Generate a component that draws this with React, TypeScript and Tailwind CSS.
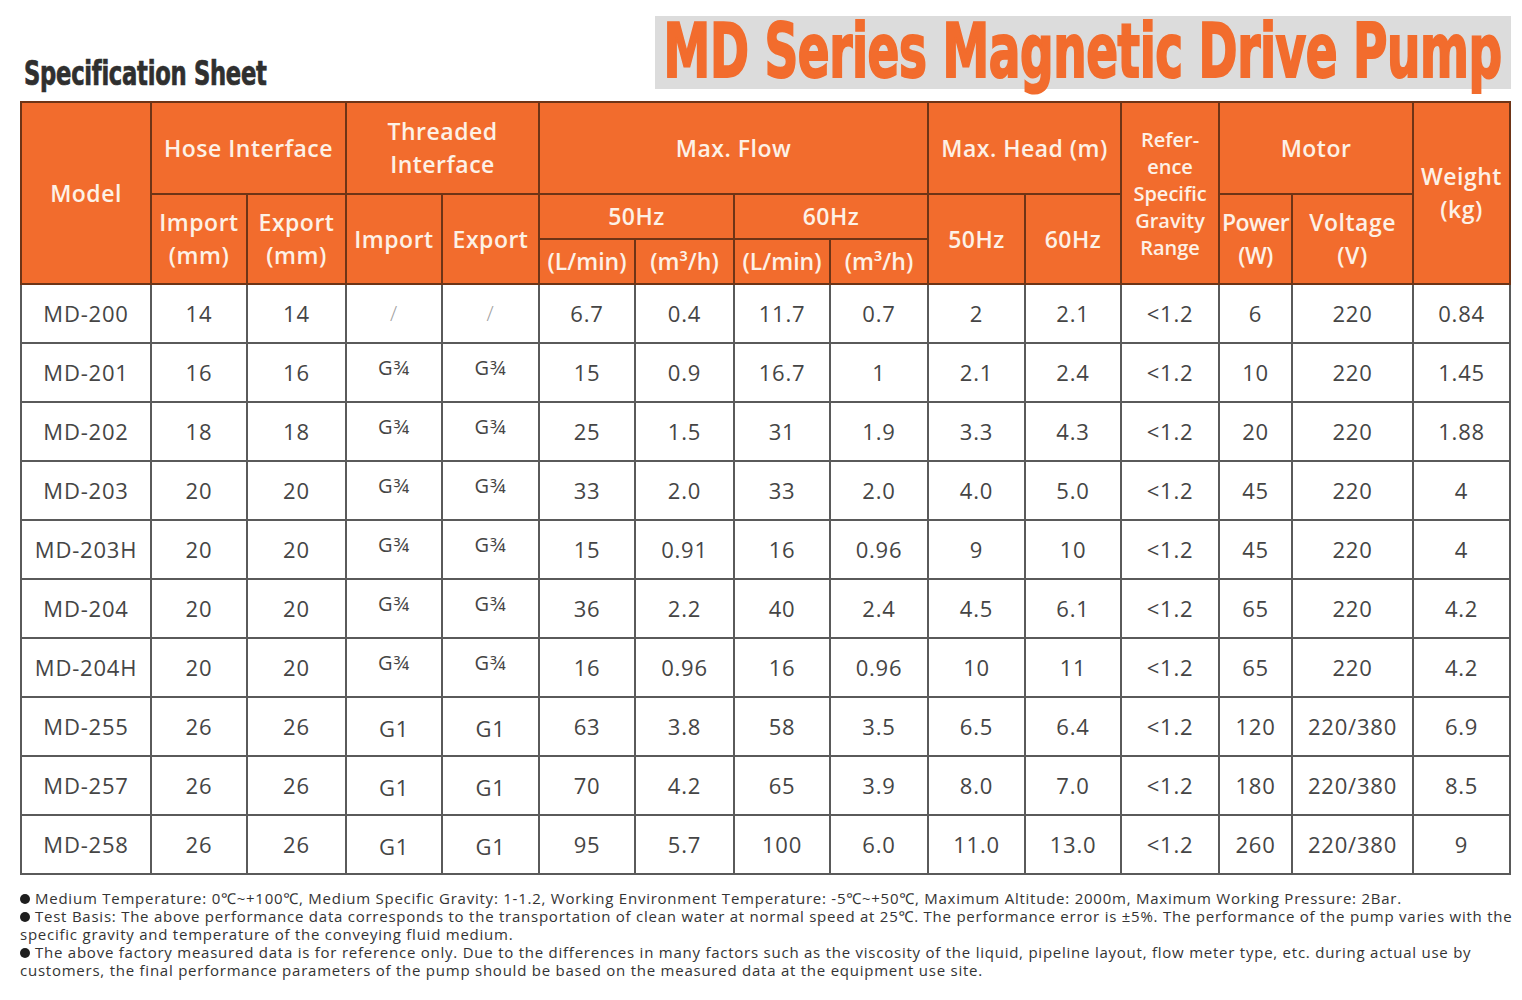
import React from "react";

const rows: string[][] = [
  ["MD-200", "14", "14", "/", "/", "6.7", "0.4", "11.7", "0.7", "2", "2.1", "<1.2", "6", "220", "0.84"],
  ["MD-201", "16", "16", "G¾", "G¾", "15", "0.9", "16.7", "1", "2.1", "2.4", "<1.2", "10", "220", "1.45"],
  ["MD-202", "18", "18", "G¾", "G¾", "25", "1.5", "31", "1.9", "3.3", "4.3", "<1.2", "20", "220", "1.88"],
  ["MD-203", "20", "20", "G¾", "G¾", "33", "2.0", "33", "2.0", "4.0", "5.0", "<1.2", "45", "220", "4"],
  ["MD-203H", "20", "20", "G¾", "G¾", "15", "0.91", "16", "0.96", "9", "10", "<1.2", "45", "220", "4"],
  ["MD-204", "20", "20", "G¾", "G¾", "36", "2.2", "40", "2.4", "4.5", "6.1", "<1.2", "65", "220", "4.2"],
  ["MD-204H", "20", "20", "G¾", "G¾", "16", "0.96", "16", "0.96", "10", "11", "<1.2", "65", "220", "4.2"],
  ["MD-255", "26", "26", "G1", "G1", "63", "3.8", "58", "3.5", "6.5", "6.4", "<1.2", "120", "220/380", "6.9"],
  ["MD-257", "26", "26", "G1", "G1", "70", "4.2", "65", "3.9", "8.0", "7.0", "<1.2", "180", "220/380", "8.5"],
  ["MD-258", "26", "26", "G1", "G1", "95", "5.7", "100", "6.0", "11.0", "13.0", "<1.2", "260", "220/380", "9"],
];

const widths = [130, 96, 99, 96, 97, 96, 99, 96, 98, 97, 96, 98, 73, 121, 97];

const H =
  "border-2 border-[#6e3416] bg-[#f26c2d] text-[#fdf1e6] font-semibold text-center align-middle p-0 leading-[33px] text-[23px] tracking-[0.5px] whitespace-nowrap";

function Cell({ v }: { v: string }) {
  if (v === "/") {
    return <span className="text-[#a0a0a0] text-[21px] font-light relative -top-[1px]">/</span>;
  }
  if (v.startsWith("G¾")) {
    return <span className="relative -top-[6px] text-[20px] tracking-[1px]">G¾</span>;
  }
  if (v === "G1") {
    return <span className="relative top-[2px]">G1</span>;
  }
  return <span>{v}</span>;
}

function Bullet() {
  return <span className="inline-block w-[10px] h-[10px] rounded-full bg-[#1e1e1e] mr-[5px]" />;
}

export default function App() {
  const font = { fontFamily: '"Open Sans", "Noto Sans", sans-serif' };
  const heavy = "font-['DejaVu_Sans_Condensed','DejaVu_Sans',sans-serif] font-bold";
  return (
    <div className="w-[1522px] h-[1000px] bg-white overflow-hidden" style={font}>
      <div className="flex h-[101px]">
        <div className="w-[655px] flex items-end pl-[24px] pb-[10px]">
          <div
            className={`${heavy} text-[28px] text-[#2f2f2f] tracking-[-0.3px] scale-x-[0.9] scale-y-[1.18] origin-bottom-left leading-none [-webkit-text-stroke:0.6px_#2f2f2f] whitespace-nowrap`}
          >
            Specification Sheet
          </div>
        </div>
        <div className="mt-[16px] w-[856px] h-[73px] bg-[#dcdcdc] flex items-center justify-center">
          <div
            className={`${heavy} text-[60px] text-[#f26c2d] leading-none scale-x-[0.87] scale-y-[1.24] -translate-y-[2px] tracking-[-0.5px] [-webkit-text-stroke:1.6px_#f26c2d] whitespace-nowrap`}
          >
            MD Series Magnetic Drive Pump
          </div>
        </div>
      </div>

      <table className="ml-[20px] table-fixed border-collapse w-[1489px]">
        <colgroup>
          {widths.map((w, i) => (
            <col key={i} style={{ width: w }} />
          ))}
        </colgroup>
        <thead>
          <tr className="h-[92px]">
            <th rowSpan={3} className={H}>Model</th>
            <th colSpan={2} className={H}>Hose Interface</th>
            <th colSpan={2} className={H}>Threaded<br />Interface</th>
            <th colSpan={4} className={H}>Max. Flow</th>
            <th colSpan={2} className={H}>Max. Head (m)</th>
            <th rowSpan={3} className={`${H} !text-[20px] !leading-[27px] !tracking-[0px]`}>
              Refer-<br />ence<br />Specific<br />Gravity<br />Range
            </th>
            <th colSpan={2} className={H}>Motor</th>
            <th rowSpan={3} className={H}>Weight<br />(kg)</th>
          </tr>
          <tr className="h-[45px]">
            <th rowSpan={2} className={H}>Import<br />(mm)</th>
            <th rowSpan={2} className={H}>Export<br />(mm)</th>
            <th rowSpan={2} className={H}>Import</th>
            <th rowSpan={2} className={H}>Export</th>
            <th colSpan={2} className={H}>50Hz</th>
            <th colSpan={2} className={H}>60Hz</th>
            <th rowSpan={2} className={H}>50Hz</th>
            <th rowSpan={2} className={H}>60Hz</th>
            <th rowSpan={2} className={`${H} !tracking-[-0.6px]`}>Power<br />(W)</th>
            <th rowSpan={2} className={H}>Voltage<br />(V)</th>
          </tr>
          <tr className="h-[45px]">
            <th className={`${H} !tracking-[0px]`}>(L/min)</th>
            <th className={`${H} !tracking-[0px]`}>(m³/h)</th>
            <th className={`${H} !tracking-[0px]`}>(L/min)</th>
            <th className={`${H} !tracking-[0px]`}>(m³/h)</th>
          </tr>
        </thead>
        <tbody>
          {rows.map((r, i) => (
            <tr key={i} className="h-[59px]">
              {r.map((v, j) => (
                <td
                  key={j}
                  className="border-2 border-[#5a5a5a] text-center align-middle p-0 text-[22px] text-[#454545] tracking-[0.8px] whitespace-nowrap"
                >
                  <Cell v={v} />
                </td>
              ))}
            </tr>
          ))}
        </tbody>
      </table>

      <div className="ml-[20px] mt-[14px] text-[15px] leading-[18px] text-[#333] whitespace-nowrap tracking-[0.76px]">
        <div><Bullet />Medium Temperature: 0℃~+100℃, Medium Specific Gravity: 1-1.2, Working Environment Temperature: -5℃~+50℃, Maximum Altitude: 2000m, Maximum Working Pressure: 2Bar.</div>
        <div><Bullet />Test Basis: The above performance data corresponds to the transportation of clean water at normal speed at 25℃. The performance error is ±5%. The performance of the pump varies with the</div>
        <div>specific gravity and temperature of the conveying fluid medium.</div>
        <div><Bullet />The above factory measured data is for reference only. Due to the differences in many factors such as the viscosity of the liquid, pipeline layout, flow meter type, etc. during actual use by</div>
        <div>customers, the final performance parameters of the pump should be based on the measured data at the equipment use site.</div>
      </div>
    </div>
  );
}
